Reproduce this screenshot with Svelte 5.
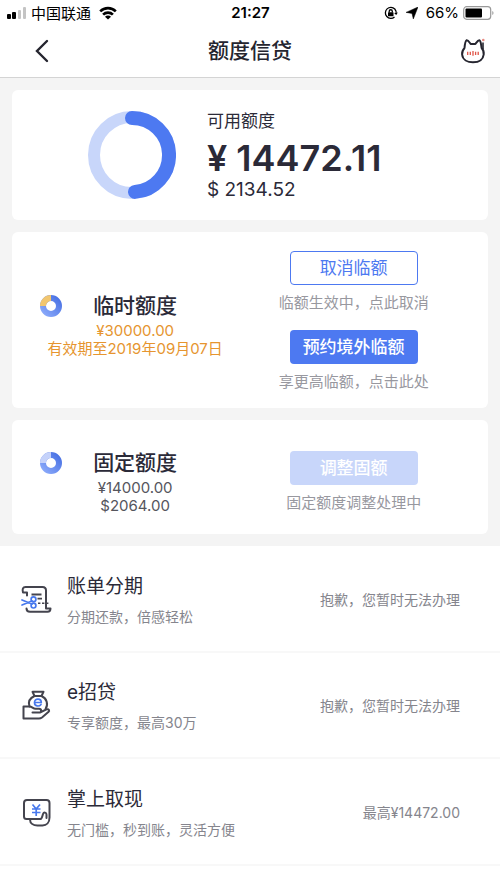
<script>
  const offers = [
    { icon: 'bill', title: '账单分期', text: '分期还款，倍感轻松', status: '抱歉，您暂时无法办理' },
    { icon: 'loan', title: 'e招贷', text: '专享额度，最高30万', status: '抱歉，您暂时无法办理' },
    { icon: 'cash', title: '掌上取现', text: '无门槛，秒到账，灵活方便', status: '最高¥14472.00' }
  ];
</script>

{#snippet ring(first, kind)}
  <svg class="mini" viewBox="0 0 22 22" aria-hidden="true">
    <defs>
      <linearGradient id={'g' + kind} x1="1" y1="0" x2="0" y2="1">
        <stop offset="0" stop-color="#4a72e4" />
        <stop offset="1" stop-color="#8aa9fa" />
      </linearGradient>
    </defs>
    <circle cx="11" cy="11" r="8" fill="none" stroke={'url(#g' + kind + ')'} stroke-width="6" />
    <path d="M3 11a8 8 0 0 1 8-8" fill="none" stroke={first} stroke-width="6" />
  </svg>
{/snippet}

<div class="screen">
  <header>
    <div class="status">
      <div class="side">
        <svg width="20" height="14" viewBox="0 0 20 14" aria-hidden="true">
          <rect x="0" y="8" width="4" height="5" rx="1" fill="#000" />
          <rect x="5" y="6" width="4" height="7" rx="1" fill="#000" />
          <rect x="11" y="4" width="3" height="9" rx="1" fill="#c4c4c4" />
          <rect x="16" y="1" width="3" height="12" rx="1" fill="#c4c4c4" />
        </svg>
        <span class="carrier">中国联通</span>
        <svg width="18" height="14" viewBox="0 0 18 14" aria-hidden="true" fill="none" stroke="#000" stroke-width="2.6">
          <path d="M1.2 5.400a11 11 0 0 1 15.600 0" />
          <path d="M4.100 8.700a6.800 6.800 0 0 1 9.800 0" />
          <path d="M9 13.500L6 10.800a4 4 0 0 1 6 0z" fill="#000" stroke="none" />
        </svg>
      </div>
      <time>21:27</time>
      <div class="side end">
        <svg width="14" height="14" viewBox="0 0 14 14" aria-hidden="true" fill="none" stroke="#000" stroke-width="1.3">
          <path d="M10.800 3A5.500 5.500 0 1 0 10.500 11M12 8.200A5.600 5.600 0 0 0 10.800 3" />
          <path d="M13.800 6.600l-1.600 2.400-2.100-1.900z" fill="#000" stroke="none" />
          <rect x="4" y="6.300" width="5.500" height="4" rx=".5" fill="#000" stroke="none" />
          <path d="M5.200 6.500V5.300a1.500 1.500 0 0 1 3.100 0v1.200" />
        </svg>
        <svg class="arrow" width="12" height="12" viewBox="0 0 12 12" aria-hidden="true"><path d="M12 0L7.300 12 6 6.400 0 5.400z" stroke="#000" stroke-width=".5" /></svg>
        <span>66%</span>
        <svg width="31" height="14" viewBox="0 0 31 14" aria-hidden="true">
          <rect x=".7" y=".7" width="27" height="12.600" rx="3" fill="none" stroke="#999" stroke-width="1.200" />
          <rect x="2.500" y="2.500" width="16.500" height="9" rx="1" />
          <path d="M29.300 5v4c1.600-.7 1.600-3.300 0-4z" fill="#999" />
        </svg>
      </div>
    </div>
    <nav>
      <button class="icon" aria-label="返回">
        <svg width="14" height="24" viewBox="0 0 14 24" fill="none" stroke="#25252f" stroke-width="2.400" stroke-linecap="round"><path d="M12 2L2 12l10 10" /></svg>
      </button>
      <h1>额度信贷</h1>
      <button class="icon end" aria-label="客服">
        <svg width="26" height="26" viewBox="0 0 26 26" fill="none">
          <path d="M4.500 10C4.800 6.500 5.200 3 6.500 2.300 8 1.800 9.500 4.500 10.600 5.900H15.400C16.500 4.500 18.300 1.600 19.600 2.300 20.800 3 21.200 6.500 21.600 10 23.500 12 24 14 23.700 16.500 23 21.900 18.300 24.300 13 24.300S2.700 21.900 2.100 16.500C1.900 14 2.800 11.800 4.500 10z" stroke="#25252f" stroke-width="2" stroke-linejoin="round" />
          <path d="M23 4.500v6.500" stroke="#25252f" stroke-width="1.600" />
          <path d="M7.700 13.700v3.300M10.300 13.700v3.300M13 13v4.700M15.600 13.700v3.300M18.200 13.700v3.300" stroke="#e05548" stroke-width="1.300" />
          <circle cx="23.300" cy="2" r="1.300" fill="#e88b82" />
        </svg>
      </button>
    </nav>
  </header>

  <main>
    <section class="card total">
      <svg class="dial" viewBox="0 0 88 88" aria-hidden="true" fill="none">
        <circle cx="44" cy="44" r="38" stroke="#c8d6fa" stroke-width="12" />
        <path d="M44 7A37 37 0 0 1 47 80.880" stroke="#4d79f1" stroke-width="14" stroke-linecap="round" />
      </svg>
      <div>
        <h2>可用额度</h2>
        <p class="amount">¥ 14472.11</p>
        <p class="dollars">$ 2134.52</p>
      </div>
    </section>

    <section class="card quota tall">
      <div class="info">
        <div class="heading">{@render ring('#f2c66f', 'temp')}<h3>临时额度</h3></div>
        <p class="orange">¥30000.00</p>
        <p class="orange">有效期至2019年09月07日</p>
      </div>
      <div class="actions">
        <button class="action outline">取消临额</button>
        <p>临额生效中，点此取消</p>
        <button class="action">预约境外临额</button>
        <p>享更高临额，点击此处</p>
      </div>
    </section>

    <section class="card quota">
      <div class="info">
        <div class="heading">{@render ring('#c5d2fa', 'fixed')}<h3>固定额度</h3></div>
        <p>¥14000.00</p>
        <p>$2064.00</p>
      </div>
      <div class="actions">
        <button class="action" disabled>调整固额</button>
        <p>固定额度调整处理中</p>
      </div>
    </section>
  </main>

  <ul>
    {#each offers as offer}
      <li>
        <a href="#{offer.icon}">
          <svg width="32" height="32" viewBox="0 0 32 32" aria-hidden="true" fill="none" stroke="#44444e" stroke-width="2" stroke-linejoin="round" stroke-linecap="round">
            {#if offer.icon === 'bill'}
              <path d="M7 11.500V8.500H3C2 5 3 3 5.500 3h17C25 3 26 4.500 26 6.500V24.500h4.500c0 2-1 3.200-3 3.200H10c-2.500 0-3.500-1-3.500-3.200" />
              <path d="M11.500 10.500h10M17.500 14.700h4.500" stroke-width="1.800" stroke-linecap="butt" />
              <path d="M18 19.300h12" stroke-width="1.600" stroke-dasharray="2.400 1.600" stroke-linecap="butt" />
              <g stroke="#4778ed" stroke-width="1.700"><path d="M2 16l10 4M2 21l10-4" /><circle cx="13.500" cy="15.200" r="2.400" /><circle cx="13.500" cy="21.600" r="2.400" /></g>
            {:else if offer.icon === 'loan'}
              <path d="M14.500 6L12.500 1.800H23.500L21.500 6M14.500 6h7" />
              <path d="M14.500 6C10 8 8 12 9.500 16.500M21.500 6c5.500 2.500 7 8.500 4 13" />
              <path d="M19 28.500H3.500V16.500H9.500c2.500 0 3.500 2.300 6 2.300h3.500c2.800 0 2.800 3.700 0 3.700H12.500M21 22l5.500-2.600c2.500-.7 3.500 1.500 1.800 2.700L22 27.500c-1 .7-2 1-3 1" />
              <path d="M14.500 12.500h6.800c0-4.500-6.800-4.500-6.800 0 0 4.200 4.700 4.300 6.500 1.900" stroke="#4778ed" stroke-width="1.700" />
            {:else}
              <path d="M20.500 22H6.500C4.500 22 4 21 4 19.500V6c0-2 1-3 3-3h19.500c2 0 3 1 3 3v14.500c0 5-3 8-7 8h-5c-4 0-7.500-2-7.500-6M21 22c1.200-1.500 1.500-3.500 2-5 .8-2.200 3.600-1.700 3.500.8V21" />
              <path d="M12.500 7.500l3.700 4.500L20 7.500M12 12h8.500M12 15.500h8.500M16.200 12V19" stroke="#4778ed" stroke-width="1.700" stroke-linecap="butt" />
            {/if}
          </svg>
          <div class="copy">
            <h3>{offer.title}</h3>
            <p>{offer.text}</p>
          </div>
          <span>{offer.status}</span>
        </a>
      </li>
    {/each}
  </ul>
</div>

<style>
  :global(body) { margin: 0; background: #fff; }
  .screen { min-height: 100vh; background: #fff; color: #2b2a38; font-family: Inter, "Noto Sans CJK SC", sans-serif; }
  h1, h2, h3, p, ul { margin: 0; padding: 0; font-weight: 400; }
  button { font: inherit; padding: 0; border: 0; background: none; }
  svg { display: block; flex: none; }

  header { border-bottom: 1px solid #d4d4d4; }
  .status { display: grid; grid-template-columns: 1fr auto 1fr; align-items: center; height: 25px; padding: 0 6px 0 7px; color: #000; font-size: 15px; }
  .side { display: flex; align-items: center; gap: 6px; }
  .side.end { justify-content: flex-end; gap: 4px; }
  .arrow { margin: 0 4px; }
  .carrier { margin: 0 2px 0 -2px; }
  time { font-weight: 600; }
  nav { display: grid; grid-template-columns: 1fr auto 1fr; align-items: center; height: 52px; padding: 0 14px 0 35px; }
  .icon { justify-self: start; }
  .icon.end { justify-self: end; }
  h1 { margin-right: 21px; font-size: 21px; line-height: 28px; font-weight: 500; color: #25252f; }

  main { display: flex; flex-direction: column; gap: 12px; padding: 12px; background: #f4f4f4; }
  .card { box-sizing: border-box; border-radius: 6px; background: #fff; }
  .total { display: flex; align-items: center; gap: 31px; min-height: 130px; padding: 0 76px; }
  .dial { width: 88px; height: 88px; }
  h2 { font-size: 17px; line-height: 24px; }
  .amount { margin-top: 5px; font-size: 36px; line-height: 40px; font-weight: 600; white-space: nowrap; }
  .dollars { font-size: 19px; line-height: 24px; }

  .quota { display: grid; grid-template-columns: 44fr 56fr; align-items: center; min-height: 114px; padding: 0 12px 0 27px; }
  .tall { min-height: 176px; }
  .info { padding-top: 8px; text-align: center; font-size: 15px; line-height: 18px; color: #55555d; }
  .heading { display: grid; grid-template-columns: 1fr auto 1fr; align-items: center; }
  .mini { width: 22px; height: 22px; margin-left: 1px; }
  .info h3 { font-size: 21px; line-height: 32px; font-weight: 500; color: #2b2a38; }
  .info .orange { color: #e6952f; }
  .actions { display: flex; flex-direction: column; align-items: center; padding-top: 9px; font-size: 15px; line-height: 20px; color: #98989f; }
  .tall .actions { padding-top: 3px; }
  .action { box-sizing: border-box; width: 128px; height: 34px; margin-bottom: 8px; border-radius: 4px; background: #4d79f1; color: #fff; font-size: 17px; font-weight: 500; }
  .actions p + .action { margin-top: 17px; }
  .outline { border: 1px solid #4d79f1; background: #fff; color: #4d79f1; font-weight: 400; }
  .action:disabled { background: #c8d6fa; }

  ul { display: grid; grid-template-rows: repeat(3, 1fr); min-height: 320px; list-style: none; }
  li { display: grid; border-bottom: 2px solid #f8f8f8; }
  a { display: flex; align-items: center; padding: 3px 40px 0 20px; color: #85858d; font-size: 14px; line-height: 20px; text-decoration: none; }
  .copy { flex: 1; margin-left: 15px; }
  .copy h3 { margin-bottom: 6px; font-size: 19px; line-height: 28px; color: #2b2a38; }
</style>
